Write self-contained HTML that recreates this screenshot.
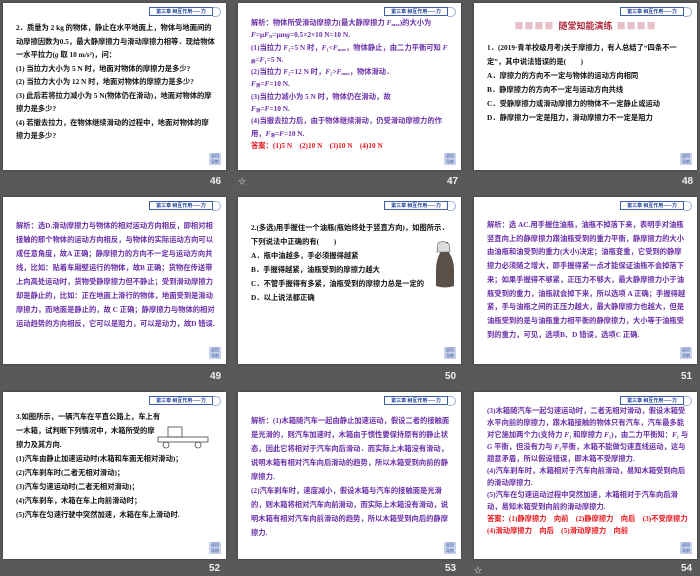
<!DOCTYPE html>
<html><head><meta charset="utf-8"><style>
body{margin:0;width:700px;height:576px;background:#595959;position:relative;overflow:hidden;font-family:"Liberation Serif","Noto Serif CJK SC","Noto Sans CJK SC",serif;}
.s{position:absolute;width:223px;height:167px;background:#fff;box-shadow:0 0 2px #333;overflow:hidden;}
.hd{position:absolute;right:13px;top:4px;width:62px;height:7px;border:1px solid #3c5fb0;background:#fff;font-size:5px;line-height:7px;color:#1f3f9a;text-align:center;font-weight:bold;font-family:"Noto Sans CJK SC",sans-serif;}
.hd:after{content:"";position:absolute;right:-9px;top:-1px;width:7px;height:8px;border:1px solid #a0b0d8;border-left:none;border-radius:0 5px 5px 0;}
.ic{position:absolute;right:5px;bottom:5px;width:12px;height:12px;background:#c8d2ea;font-size:4px;line-height:6px;color:#2a4a9a;text-align:center;font-family:"Noto Sans CJK SC",sans-serif;}
.t{position:absolute;left:13px;right:10px;top:19px;font-size:7.3px;line-height:13.5px;font-weight:bold;color:#111;font-family:"Liberation Serif","Noto Sans CJK SC",sans-serif;}
.t sub{font-size:4.5px;line-height:0;vertical-align:-1px;}
.p{color:#6a2fa8;}
.r{color:#e8141a;}
.n{position:absolute;color:#eee;font:bold 10px "Liberation Sans",sans-serif;}
.st{position:absolute;color:#ddd;font-size:8px;font-family:"Noto Sans CJK SC",sans-serif;}
</style></head><body>

<div class="s" style="left:3px;top:3px"><div class="hd">第三章 相互作用——力</div>
<div class="t" style="top:18px">2．质量为 2 kg 的物体，静止在水平地面上，物体与地面间的动摩擦因数为0.5，最大静摩擦力与滑动摩擦力相等．现给物体一水平拉力(<i>g</i> 取 10 m/s²)，问：<br>(1) 当拉力大小为 5 N 时，地面对物体的摩擦力是多少?<br>(2) 当拉力大小为 12 N 时，地面对物体的摩擦力是多少?<br>(3) 此后若将拉力减小为 5 N(物体仍在滑动)，地面对物体的摩擦力是多少?<br>(4) 若撤去拉力，在物体继续滑动的过程中，地面对物体的摩擦力是多少?</div>
<div class="ic">返回<br>导航</div></div>
<div class="n" style="left:210px;top:176px">46</div>

<div class="s" style="left:238px;top:3px"><div class="hd">第三章 相互作用——力</div>
<div class="t p" style="top:14px;line-height:12.3px">解析：物体所受滑动摩擦力(最大静摩擦力 <i>F</i><sub>max</sub>)的大小为 <i>F</i>=μ<i>F</i><sub>N</sub>=μ<i>mg</i>=0.5×2×10 N=10 N.<br>(1)当拉力 <i>F</i>₁=5 N 时，<i>F</i>₁&lt;<i>F</i><sub>max</sub>，物体静止，由二力平衡可知 <i>F</i><sub>静</sub>=<i>F</i>₁=5 N.<br>(2)当拉力 <i>F</i>₂=12 N 时，<i>F</i>₂&gt;<i>F</i><sub>max</sub>，物体滑动．<br><i>F</i><sub>滑</sub>=<i>F</i>=10 N.<br>(3)当拉力减小为 5 N 时，物体仍在滑动，故<br><i>F</i><sub>滑</sub>=<i>F</i>=10 N.<br>(4)当撤去拉力后，由于物体继续滑动，仍受滑动摩擦力的作用，<i>F</i><sub>滑</sub>=<i>F</i>=10 N.<br><span class="r">答案：(1)5 N　(2)10 N　(3)10 N　(4)10 N</span></div>
<div class="ic">返回<br>导航</div></div>
<div class="st" style="left:238px;top:176px">☆</div><div class="n" style="left:447px;top:176px">47</div>

<div class="s" style="left:474px;top:3px"><div class="hd">第三章 相互作用——力</div>
<div style="position:absolute;left:0;right:0;top:16px;text-align:center;font:bold 9px 'Noto Sans CJK SC',sans-serif;color:#b0283a"><span style="color:#e8c0c8;letter-spacing:1px">■■■■</span>&nbsp; 随堂知能演练 &nbsp;<span style="color:#e8c0c8;letter-spacing:1px">■■■■</span></div>
<div class="t" style="top:38px;line-height:14px">1．(2019·青羊校级月考)关于摩擦力，有人总结了“四条不一定”，其中说法错误的是(　　)<br>A．摩擦力的方向不一定与物体的运动方向相同<br>B．静摩擦力的方向不一定与运动方向共线<br>C．受静摩擦力或滑动摩擦力的物体不一定静止或运动<br>D．静摩擦力一定是阻力，滑动摩擦力不一定是阻力</div>
<div class="ic">返回<br>导航</div></div>
<div class="n" style="left:682px;top:176px">48</div>

<div class="s" style="left:3px;top:197px"><div class="hd">第三章 相互作用——力</div>
<div class="t p" style="top:22px;line-height:14px">解析：选D.滑动摩擦力与物体的相对运动方向相反，即相对相接触的那个物体的运动方向相反，与物体的实际运动方向可以成任意角度，故A 正确；静摩擦力的方向不一定与运动方向共线，比如：贴着车厢壁运行的物体，故B 正确；货物在传送带上向高处运动时，货物受静摩擦力但不静止；受到滑动摩擦力却是静止的，比如：正在地面上滑行的物体，地面受到是滑动摩擦力，而地面是静止的，故 C 正确；静摩擦力与物体的相对运动趋势的方向相反，它可以是阻力，可以是动力，故D 错误.</div>
<div class="ic">返回<br>导航</div></div>
<div class="n" style="left:210px;top:371px">49</div>

<div class="s" style="left:238px;top:197px"><div class="hd">第三章 相互作用——力</div>
<div class="t" style="top:24px;line-height:14px">2.(多选)用手握住一个油瓶(瓶始终处于竖直方向)，如图所示．下列说法中正确的有(　　)<br>A．瓶中油越多，手必须握得越紧<br>B．手握得越紧，油瓶受到的摩擦力越大<br>C．不管手握得有多紧，油瓶受到的摩擦力总是一定的<br>D．以上说法都正确</div>
<svg style="position:absolute;left:196px;top:43px" width="22" height="50"><path d="M6 2 L14 2 L13 10 Q20 18 20 30 L20 46 Q11 49 2 46 L2 30 Q2 18 8 10 Z" fill="#5a5048"/><path d="M4 3 Q9 0 15 4 L16 12 L3 12 Z" fill="#ddd" stroke="#555" stroke-width="0.6"/></svg>
<div class="ic">返回<br>导航</div></div>
<div class="n" style="left:445px;top:371px">50</div>

<div class="s" style="left:474px;top:197px"><div class="hd">第三章 相互作用——力</div>
<div class="t p" style="top:21px;line-height:13.7px">解析：选 AC.用手握住油瓶，油瓶不掉落下来，表明手对油瓶竖直向上的静摩擦力跟油瓶受到的重力平衡，静摩擦力的大小由油瓶和油受到的重力(大小)决定；油瓶变重，它受到的静摩擦力必须随之增大，即手握得紧一点才能保证油瓶不会掉落下来；如果手握得不够紧，正压力不够大，最大静摩擦力小于油瓶受到的重力，油瓶就会掉下来，所以选项 A 正确；手握得越紧，手与油瓶之间的正压力越大，最大静摩擦力也越大，但是油瓶受到的是与油瓶重力相平衡的静摩擦力，大小等于油瓶受到的重力，可见，选项B、D 错误，选项C 正确.</div>
<div class="ic">返回<br>导航</div></div>
<div class="n" style="left:681px;top:371px">51</div>

<div class="s" style="left:3px;top:392px"><div class="hd">第三章 相互作用——力</div>
<div class="t" style="top:18px;line-height:14px">3.如图所示，一辆汽车在平直公路上，车上有<br>一木箱，试判断下列情况中，木箱所受的摩<br>擦力及其方向.<br>(1)汽车由静止加速运动时(木箱和车面无相对滑动)；<br>(2)汽车刹车时(二者无相对滑动)；<br>(3)汽车匀速运动时(二者无相对滑动)；<br>(4)汽车刹车，木箱在车上向前滑动时；<br>(5)汽车在匀速行驶中突然加速，木箱在车上滑动时.</div>
<svg style="position:absolute;left:153px;top:34px" width="55" height="25" fill="none" stroke="#444" stroke-width="0.8"><rect x="12" y="1" width="14" height="10"/><rect x="2" y="11" width="50" height="5"/><circle cx="10" cy="19" r="3"/><circle cx="42" cy="19" r="3"/></svg>
<div class="ic">返回<br>导航</div></div>
<div class="n" style="left:209px;top:563px">52</div>

<div class="s" style="left:238px;top:392px"><div class="hd">第三章 相互作用——力</div>
<div class="t p" style="top:22px;line-height:14px">解析：(1)木箱随汽车一起由静止加速运动，假设二者的接触面是光滑的，则汽车加速时，木箱由于惯性要保持原有的静止状态，因此它将相对于汽车向后滑动．而实际上木箱没有滑动，说明木箱有相对汽车向后滑动的趋势，所以木箱受到向前的静摩擦力.<br>(2)汽车刹车时，速度减小，假设木箱与汽车的接触面是光滑的，则木箱将相对汽车向前滑动，而实际上木箱没有滑动，说明木箱有相对汽车向前滑动的趋势，所以木箱受到向后的静摩擦力.</div>
<div class="ic">返回<br>导航</div></div>
<div class="n" style="left:445px;top:563px">53</div>

<div class="s" style="left:474px;top:392px"><div class="hd">第三章 相互作用——力</div>
<div class="t p" style="top:13px;line-height:12px;right:8px">(3)木箱随汽车一起匀速运动时，二者无相对滑动，假设木箱受水平向前的摩擦力，跟木箱接触的物体只有汽车，汽车最多能对它施加两个力(支持力 <i>F</i>₁ 和摩擦力 <i>F</i>₂)，由二力平衡知：<i>F</i>₁ 与 <i>G</i> 平衡，但没有力与 <i>F</i>₂平衡，木箱不能做匀速直线运动，这与题意矛盾，所以假设错误，即木箱不受摩擦力.<br>(4)汽车刹车时，木箱相对于汽车向前滑动，易知木箱受到向后的滑动摩擦力.<br>(5)汽车在匀速运动过程中突然加速，木箱相对于汽车向后滑动，易知木箱受到向前的滑动摩擦力.<br><span class="r">答案：(1)静摩擦力　向前　(2)静摩擦力　向后　(3)不受摩擦力　(4)滑动摩擦力　向后　(5)滑动摩擦力　向前</span></div>
<div class="ic">返回<br>导航</div></div>
<div class="st" style="left:474px;top:565px">☆</div><div class="n" style="left:681px;top:563px">54</div>

</body></html>
